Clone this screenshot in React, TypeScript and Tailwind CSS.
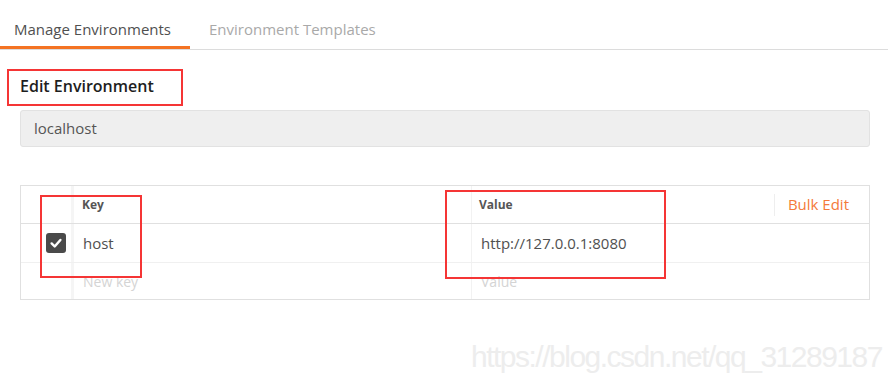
import React from "react";

const font = { fontFamily: '"Open Sans", "Noto Sans", sans-serif' };

function Check() {
  return (
    <span className="flex h-[20px] w-[20px] items-center justify-center rounded-[3px] bg-[#4a4a4a]">
      <svg viewBox="0 0 16 16" className="h-[14px] w-[14px]">
        <path
          d="M3 8.5 L6.5 12 L13 4.5"
          fill="none"
          stroke="#fff"
          strokeWidth="2.8"
          strokeLinecap="round"
          strokeLinejoin="round"
        />
      </svg>
    </span>
  );
}

export default function App() {
  return (
    <div
      className="relative h-[383px] w-[888px] overflow-hidden bg-white text-[#505050]"
      style={font}
    >
      {/* tabs */}
      <div className="flex h-[50px] border-b border-[#dcdcdc]">
        <div className="flex w-[190px] items-center border-b-[3px] border-[#f47323] pl-[14px] pt-[12px] text-[15px] text-[#505050]">
          Manage Environments
        </div>
        <div className="flex items-center pl-[19px] pt-[9px] text-[15px] text-[#a9a9a9]">
          Environment Templates
        </div>
      </div>

      {/* edit env */}
      <div className="pl-[20px] pr-[18px]">
        <div className="flex h-[60px] items-center pt-[11px] text-[16px] font-semibold text-[#1e1e1e]">
          Edit Environment
        </div>
        <div className="flex h-[37px] items-center rounded-[3px] border border-[#e2e2e2] bg-[#efefef] pl-[13px] text-[15px] text-[#555]">
          localhost
        </div>

        {/* table */}
        <div className="mt-[38px] border border-[#e0e0e0]">
          <div className="grid h-[38px] grid-cols-[50px_400px_1fr] border-b border-[#e0e0e0]">
            <div />
            <div className="flex items-center border-l-[3px] border-[#f5f5f5] pl-[8px] text-[12px] font-bold text-[#555]">
              Key
            </div>
            <div className="flex items-center border-l border-[#f2f2f2] pl-[7px]">
              <span className="flex-1 text-[12px] font-bold text-[#555]">Value</span>
              <span className="flex h-[22px] items-center border-l border-[#eeeeee] pl-[13px] pr-[20px] text-[15px] text-[#f47a3a]">
                Bulk Edit
              </span>
            </div>
          </div>
          <div className="grid h-[39px] grid-cols-[50px_400px_1fr] border-b border-[#f0f0f0]">
            <div className="flex items-center pl-[25px]">
              <Check />
            </div>
            <div className="flex items-center border-l-[3px] border-[#f5f5f5] pl-[9px] text-[15px] text-[#505050]">
              host
            </div>
            <div className="flex items-center border-l border-[#f2f2f2] pl-[9px] text-[15px] text-[#505050]">
              http://127.0.0.1:8080
            </div>
          </div>
          <div className="grid h-[36px] grid-cols-[50px_400px_1fr]">
            <div />
            <div className="flex items-center border-l-[3px] border-[#f5f5f5] pl-[9px] text-[14px] text-[#d4d4d4]">
              New key
            </div>
            <div className="flex items-center border-l border-[#f2f2f2] pl-[9px] text-[14px] text-[#d4d4d4]">
              Value
            </div>
          </div>
        </div>
      </div>

      {/* annotation boxes */}
      <div className="pointer-events-none absolute left-[7px] top-[69px] h-[37px] w-[176px] border-2 border-[#f53535]" />
      <div className="pointer-events-none absolute left-[40px] top-[195px] h-[83px] w-[102px] border-2 border-[#f53535]" />
      <div className="pointer-events-none absolute left-[445px] top-[190px] h-[89px] w-[221px] border-2 border-[#f53535]" />

      {/* watermark */}
      <div
        className="pointer-events-none absolute left-[471px] top-[342px] text-[30px] leading-none tracking-[-1.5px] text-[#ededed]"
        style={{ fontFamily: '"Liberation Sans", Arial, sans-serif' }}
      >
        https://blog.csdn.net/qq_31289187
      </div>
    </div>
  );
}
